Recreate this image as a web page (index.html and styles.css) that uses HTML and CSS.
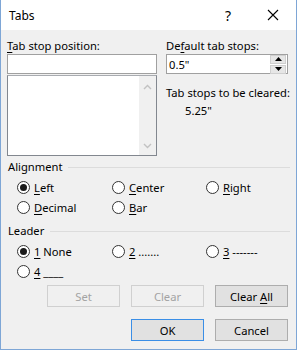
FILE: index.html
```html
<!DOCTYPE html>
<html lang="en">
<head>
    <meta charset="UTF-8">
    <title>Tabs</title>
    <link rel="stylesheet" href="styles.css">
</head>
<body>
    <div class="window">
        <div class="titlebar">
            <span class="title">Tabs</span>
            <span class="help">?</span>
            <span class="close">
                <svg width="12" height="12" viewBox="0 0 12 12"><path d="M1 1 L11 11 M11 1 L1 11" stroke="#000" stroke-width="1.1" fill="none"/></svg>
            </span>
        </div>

        <div class="content">
            <div class="top">
                <div class="col-left">
                    <p class="label"><u>T</u>ab stop position:</p>
                    <div class="input"></div>
                    <div class="listbox">
                        <div class="list-area"></div>
                        <div class="scrollbar">
                            <svg width="9" height="6" viewBox="0 0 9 6"><path d="M1 5 L4.5 1.5 L8 5" stroke="#c2c2c2" stroke-width="1.4" fill="none"/></svg>
                            <svg width="9" height="6" viewBox="0 0 9 6"><path d="M1 1 L4.5 4.5 L8 1" stroke="#c2c2c2" stroke-width="1.4" fill="none"/></svg>
                        </div>
                    </div>
                </div>
                <div class="col-right">
                    <p class="label">De<u>f</u>ault tab stops:</p>
                    <div class="input spin-input">
                        <span>0.5"</span>
                        <div class="spinner">
                            <div class="spin-btn"><svg width="7" height="4" viewBox="0 0 7 4"><path d="M0 4 L3.5 0 L7 4 Z" fill="#000"/></svg></div>
                            <div class="spin-btn"><svg width="7" height="4" viewBox="0 0 7 4"><path d="M0 0 L3.5 4 L7 0 Z" fill="#000"/></svg></div>
                        </div>
                    </div>
                    <p class="label cleared">Tab stops to be cleared:</p>
                    <p class="label cleared-value">5.25"</p>
                </div>
            </div>

            <div class="group">
                <div class="group-title"><span>Alignment</span><div class="rule"></div></div>
                <div class="radios">
                    <div class="radio"><span class="dot checked"></span><span><u>L</u>eft</span></div>
                    <div class="radio"><span class="dot"></span><span><u>C</u>enter</span></div>
                    <div class="radio"><span class="dot"></span><span><u>R</u>ight</span></div>
                    <div class="radio"><span class="dot"></span><span><u>D</u>ecimal</span></div>
                    <div class="radio"><span class="dot"></span><span><u>B</u>ar</span></div>
                </div>
            </div>

            <div class="group leader">
                <div class="group-title"><span>Leader</span><div class="rule"></div></div>
                <div class="radios">
                    <div class="radio"><span class="dot checked"></span><span><u>1</u> None</span></div>
                    <div class="radio"><span class="dot"></span><span><u>2</u> .......</span></div>
                    <div class="radio"><span class="dot"></span><span><u>3</u> -------</span></div>
                    <div class="radio"><span class="dot"></span><span><u>4</u> ____</span></div>
                </div>
            </div>

            <div class="buttons">
                <button class="btn" disabled>Set</button>
                <button class="btn" disabled>Clear</button>
                <button class="btn">Clear <u>A</u>ll</button>
            </div>
            <div class="buttons second">
                <button class="btn default">OK</button>
                <button class="btn">Cancel</button>
            </div>
        </div>
    </div>
</body>
</html>
```

FILE: styles.css
```css
body {
    margin: 0;
    font-family: "Noto Sans", "DejaVu Sans", sans-serif;
    font-size: 11.2px;
    color: #000;
}

p { margin: 0; }

u { text-underline-offset: 2px; }

.window {
    width: 297px;
    height: 350px;
    box-sizing: border-box;
    border: 1px solid #7ea6d6;
    border-top: none;
    background: #f0f0f0;
}

/* barra de titulo */
.titlebar {
    height: 30px;
    background: #fff;
    display: flex;
    align-items: center;
}
.title {
    margin-left: 8px;
    flex: 1;
    font-size: 12px;
}
.help {
    width: 14px;
    text-align: center;
    font-size: 14px;
    margin-right: 32px;
}
.close {
    width: 12px;
    height: 12px;
    margin-right: 17px;
    display: flex;
}

.content {
    padding: 8px 8px 0 6px;
}

.top {
    display: flex;
    gap: 9px;
}
.col-left { width: 151px; }
.col-right { width: 122px; }

.label {
    line-height: 16px;
    height: 16px;
    white-space: nowrap;
}

.input {
    height: 20px;
    box-sizing: border-box;
    border: 1px solid #a0a0a0;
    background: #fff;
}

.listbox {
    height: 81px;
    box-sizing: border-box;
    border: 1px solid #82878f;
    border-top-color: #a8abb0;
    display: flex;
    background: #fff;
    margin-top: 1px;
}
.list-area { flex: 1; }
.scrollbar {
    width: 17px;
    background: #f0f0f0;
    display: flex;
    flex-direction: column;
    justify-content: space-between;
    align-items: center;
    padding: 8px 0 6px;
}

.spin-input {
    display: flex;
    align-items: center;
    justify-content: space-between;
    padding-left: 2px;
    padding-right: 1px;
}
.spinner {
    display: flex;
    flex-direction: column;
    gap: 1px;
}
.spin-btn {
    width: 14px;
    height: 7px;
    background: #e6e6e6;
    border: 1px solid #cfcfcf;
    display: flex;
    align-items: center;
    justify-content: center;
}
.cleared { margin-top: 11px; }
.cleared-value { margin-top: 2px; padding-left: 19px; }

/* grupos */
.group { margin-top: 3px; }
.leader { margin-top: 6px; }
.group-title {
    display: flex;
    align-items: center;
    line-height: 16px;
    padding-left: 1px;
}
.rule {
    flex: 1;
    height: 1px;
    background: #dcdcdc;
    margin-left: 6px;
    margin-right: -2px;
}
.radios {
    display: grid;
    grid-template-columns: 95px 94px auto;
    padding: 3px 0 0 10px;
}
.radio {
    height: 19.5px;
    display: flex;
    align-items: center;
    gap: 4px;
}
.dot {
    width: 13px;
    height: 13px;
    box-sizing: border-box;
    border: 1px solid #333;
    border-radius: 50%;
    background: #fff;
    display: flex;
    align-items: center;
    justify-content: center;
}
.dot.checked::after {
    content: "";
    width: 7px;
    height: 7px;
    border-radius: 50%;
    background: #1a1a1a;
}

/* botones */
.buttons {
    display: flex;
    justify-content: flex-end;
    gap: 11px;
    margin-top: 4px;
}
.buttons.second { margin-top: 12px; }
.btn {
    width: 73px;
    height: 22px;
    font-family: inherit;
    font-size: 11.2px;
    background: #e1e1e1;
    border: 1px solid #adadad;
    color: #000;
    padding: 0;
}
.btn:disabled {
    background: #f0f0f0;
    border-color: #d0d0d0;
    color: #a3a3a3;
}
.btn.default {
    border-color: #3a8ee6;
}
```
